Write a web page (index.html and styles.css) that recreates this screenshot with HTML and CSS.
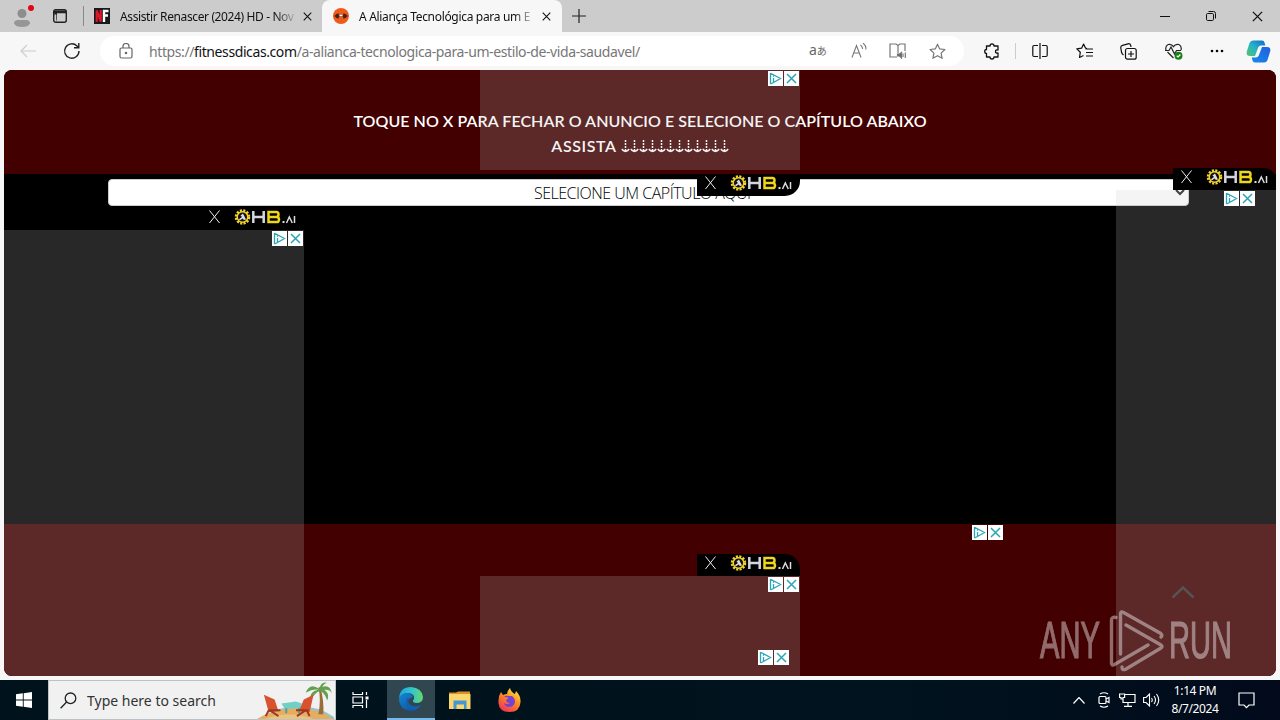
FILE: index.html
```html
<!DOCTYPE html>
<html lang="pt">
<head>
<meta charset="utf-8">
<title>A Aliança Tecnológica para um Estilo de Vida Saudável</title>
<link rel="stylesheet" href="styles.css">
</head>
<body>
<svg class="defs" aria-hidden="true">
  <symbol id="adchoice" viewBox="0 0 31 15">
    <path fill="#fff" d="M0 0h15v15H0zM16 0h15v15H16z"/>
    <path d="M2.500 2v11M2.500 2.200 12.500 7.500 5.500 11.500V7M5.500 4.600v1.200M2.500 13l3-1.500" fill="none" stroke="#2aa5b8" stroke-width="1.300"/>
    <path d="m19 3 9 9m0-9-9 9" stroke="#2aa5b8" stroke-width="1.500"/>
  </symbol>
  <symbol id="close" viewBox="0 0 10 10"><path d="m.8.8 8.400 8.400m0-8.400L.8 9.200" fill="none" stroke="currentColor" stroke-width="1.200"/></symbol>
  <symbol id="hb" viewBox="0 0 103 22">
    <path d="m8.500 2.500 10 12.500m0-12.500-10 12.500" stroke="#eee" stroke-width="1" fill="none"/>
    <circle cx="41.500" cy="9" r="6.500" fill="none" stroke="#f2d22b" stroke-width="2.500" stroke-dasharray="2.100 1.300"/>
    <circle cx="41.500" cy="9" r="5.300" fill="#111" stroke="#f2d22b" stroke-width="1.500"/>
    <path d="M37.500 11.500 41 9l-1.500-1.500L42 5.500l1.500 3 1.500 3-2 .5-1.500-1.500-2 1.500z" fill="#ddd"/>
    <path d="M52.300 3v12M62.700 3v12M52 9h11" fill="none" stroke="#d5d5e2" stroke-width="2.500"/>
    <path d="M67.500 4h8q2 0 2 2.500T75 9h-7.500 8q2.500 0 2.500 2.600T75.500 14h-8z" fill="none" stroke="#f0d51b" stroke-width="2.500"/>
    <path d="M81.500 13h2v2h-2z" fill="#ddd"/>
    <path d="m85.500 15 2.800-6 3 6M93.500 8v7" fill="none" stroke="#ddd" stroke-width="1.500"/>
  </symbol>
</svg>

<header class="tabs">
  <div class="profile">
    <svg width="20" height="20" viewBox="0 0 20 20"><circle cx="10" cy="5.500" r="4.500" fill="#8d8d8d"/><path d="M2 15.500Q2 12 6 12h8q4 0 4 3.500Q16 19 10 19t-8-3.500z" fill="#969696"/></svg>
    <i class="dot"></i>
  </div>
  <svg class="tabmenu" width="14" height="14" viewBox="0 0 14 14"><rect x=".7" y=".7" width="12.600" height="12.600" rx="2" fill="none" stroke="#222" stroke-width="1.400"/><path d="M1 1.500h12v2.800H1zM1 4h3v9" fill="#222"/><path d="M2 5.500h1.300V12H2z" fill="#ccc"/></svg>
  <i class="divider"></i>
  <div class="tab">
    <svg width="16" height="16" viewBox="0 0 16 16"><path fill="#17191b" d="M0 0h16v16H0z"/><path d="M2.700 14V2.500l4 11V2" fill="none" stroke="#dd1727" stroke-width="2.200"/><path d="M10 14V3h4.500M10 7.500h4" fill="none" stroke="#fff" stroke-width="2.400"/></svg>
    <span class="title t1">Assistir Renascer (2024) HD - Nov</span>
    <svg class="x" width="9" height="9"><use href="#close"/></svg>
  </div>
  <div class="tab active">
    <svg width="16" height="16" viewBox="0 0 16 16"><circle cx="8" cy="8" r="8" fill="#ef5b1a"/><path d="M1.500 8h13" stroke="#4a2018" stroke-width="1.500"/><path d="M3.500 6v4M5 5.500v5M11 5.500v5M12.500 6v4" stroke="#4a2018" stroke-width="1.500"/><path d="M6.500 7.600h3" stroke="#fff" stroke-width="1.500"/></svg>
    <span class="title t2">A Aliança Tecnológica para um E</span>
    <svg class="x" width="9" height="9"><use href="#close"/></svg>
  </div>
  <svg class="plus" width="14" height="14" viewBox="0 0 14 14"><path d="M7 0v14M0 7h14" stroke="#222" stroke-width="1.200"/></svg>
  <div class="winbtns">
    <svg width="10" height="10"><path d="M0 5.500h10" stroke="#111"/></svg>
    <svg width="10" height="10" viewBox="0 0 10 10" fill="none" stroke="#111"><rect x=".5" y="2.500" width="7" height="7" rx="1.200"/><path d="M2.500.5H7.500q2 0 2 2V7.500"/></svg>
    <svg width="11" height="11"><use href="#close"/></svg>
  </div>
</header>

<nav class="toolbar">
  <svg class="back" width="17" height="14" viewBox="0 0 17 14" fill="none" stroke="#ccc" stroke-width="1.100"><path d="M16 7H1m6-6L1 7l6 6"/></svg>
  <svg class="reload" width="18" height="18" viewBox="0 0 18 18" fill="none" stroke="#222" stroke-width="1.400"><path d="M16 9a7.200 7.200 0 1 1-2-5l1.500 1.500M15.800 1v4.800H11"/></svg>
  <div class="address">
    <svg width="14" height="16" viewBox="0 0 14 16" fill="none" stroke="#666" stroke-width="1.200"><rect x="1" y="5" width="12" height="10" rx="1.500"/><path d="M4 5V3.500a3 3 0 0 1 6 0V5"/><circle cx="7" cy="10" r=".7" fill="#555"/></svg>
    <span class="url">https://<b>fitnessdicas.com</b>/a-alianca-tecnologica-para-um-estilo-de-vida-saudavel/</span>
    <div class="addricons">
      <span class="lang">a<small>あ</small></span>
      <svg width="16" height="16" viewBox="0 0 16 16" fill="none" stroke="#777" stroke-width="1.100"><path d="m1 14.500 4.500-12 4.500 12M2.700 10h5.600M9.500 2q2.300 2 2 4M12 0q3.500 3 2.800 6.500"/></svg>
      <svg width="18" height="16" viewBox="0 0 18 16" fill="none" stroke="#777" stroke-width="1.200"><path d="M8 14H1V1h6l2 1.500L11 1h5v7M9 2.500V10"/><path d="M8.500 11v2h2l2 2V9.500l-2 1.500z" fill="#666"/><path d="M14 10.500v3.500M16.300 9.500V15"/></svg>
      <svg width="17" height="17" viewBox="0 0 17 17" fill="none" stroke="#777" stroke-width="1.200" stroke-linejoin="round"><path d="m8.500 1.200 2.200 4.700 5.200.6-3.800 3.600 1 5.200-4.600-2.600-4.600 2.600 1-5.200L1.100 6.500l5.200-.6z"/></svg>
    </div>
  </div>
  <svg class="puzzle" width="16" height="17" viewBox="0 0 16 17" fill="none" stroke="#111" stroke-width="1.300" stroke-linejoin="round"><path d="M2.500 3H6Q6 .8 8 .8T10 3h4v4q-2.500-.4-2.500 1.500T14 10v4h-4q0 2-2 2t-2-2H2.500v-3.500Q.7 10.500.7 8.500t1.800-2z"/></svg>
  <i class="sep"></i>
  <div class="actions">
    <svg width="16" height="16" viewBox="0 0 16 16" fill="none" stroke="#111" stroke-width="1.200"><path d="M8 0v16M6 2.500H2q-1.200 0-1.200 1.200v8.600q0 1.200 1.200 1.200h4M10 2.500h4q1.200 0 1.200 1.200v8.600q0 1.200-1.200 1.200h-4"/></svg>
    <svg width="17" height="16" viewBox="0 0 17 16" fill="none" stroke="#111" stroke-width="1.200" stroke-linejoin="round"><path d="M11 5.500 9.500 5 7.600 1 5.600 5.200.8 5.900 4.300 9.300 3.500 14.500 7.500 12.500M9.500 6H17M10 9.500h7M10 13h7"/></svg>
    <svg width="17" height="17" viewBox="0 0 17 17" fill="none" stroke="#111" stroke-width="1.200"><rect x="5.500" y="5.500" width="10.700" height="10.700" rx="2"/><path d="M11 8v6M8 11h6M3.500 12Q2 11 1.600 9.500L.8 5Q.5 3 2.500 2.400L8 .8q2-.5 2.600 1.200L11 4"/></svg>
    <svg width="18" height="17" viewBox="0 0 18 17" fill="none" stroke="#222" stroke-width="1.200"><path d="M8.500 15 2.500 9M1 7Q0 3 3.200 1.500 6.500.6 8.500 3.600 10.500.6 13.800 1.500 17 3 16 7M0 7.500h4L6 4l3.500 7L11.500 7.500H16"/><circle cx="13.500" cy="12.700" r="4" fill="#188018" stroke="none"/><path d="m11.700 12.700 1.400 1.300 2.300-2.500" stroke="#fff"/></svg>
    <svg width="14" height="4" viewBox="0 0 14 4"><circle cx="2" cy="2" r="1.300"/><circle cx="7" cy="2" r="1.300"/><circle cx="12" cy="2" r="1.300"/></svg>
  </div>
  <svg class="copilot" width="25" height="23" viewBox="0 0 25 23">
    <defs><linearGradient id="ca" x1="0" y1="1" x2="1" y2="0"><stop offset="0" stop-color="#52c46a"/><stop offset=".5" stop-color="#24b3c8"/><stop offset="1" stop-color="#1265d2"/></linearGradient><linearGradient id="cb" x1="0" y1="1" x2="1" y2="0"><stop offset="0" stop-color="#168bea"/><stop offset="1" stop-color="#225ee0"/></linearGradient></defs>
    <path d="M7 .5h9q2 0 2.500 2l.8 3H15q-2 0-2.800 2L9 16H4Q0 16 .7 12L3.500 3Q4.500.5 7 .5z" fill="url(#ca)"/><path d="M18 22.500H9q-2 0-2.500-2l-.8-3H10q2 0 2.800-2L16 7h5q4 0 3.300 4l-2.800 9q-1 2.500-3.500 2.500z" fill="url(#cb)"/>
  </svg>
</nav>

<main class="page">
  <section class="notice"><p class="l1">TOQUE NO X PARA FECHAR O ANUNCIO E SELECIONE O CAPÍTULO ABAIXO</p><p class="l2"><span>ASSISTA</span> <svg width="108" height="13" viewBox="0 0 108 13"><defs><pattern id="arrows" width="9" height="13" patternUnits="userSpaceOnUse"><path d="M4.500 0v11" stroke="#fff" stroke-width="1.500" stroke-dasharray="2 1"/><path d="m.8 9 1.500 1.500 2.200 1 2.200-1L8.200 9" fill="none" stroke="#fff" stroke-width="1.500"/></pattern></defs><path fill="url(#arrows)" d="M0 0h108v13H0z"/></svg></p></section>
  <section class="player">
    <div class="select"><span>SELECIONE UM CAPÍTULO AQUI</span><svg width="10" height="7" viewBox="0 0 10 7"><path d="m1 1 4 4 4-4" fill="none" stroke="#222" stroke-width="2"/></svg></div>
  </section>
  <section class="foot"></section>

  <div class="ad ad-top"><svg width="31" height="15"><use href="#adchoice"/></svg></div>
  <div class="ad ad-left"><svg width="31" height="15"><use href="#adchoice"/></svg></div>
  <div class="ad ad-right"></div>
  <div class="ad ad-bottom"><svg width="31" height="15"><use href="#adchoice"/></svg></div>
  <svg class="mark m-right" width="31" height="15"><use href="#adchoice"/></svg>
  <svg class="mark m-mid" width="31" height="15"><use href="#adchoice"/></svg>
  <svg class="mark m-low" width="31" height="15"><use href="#adchoice"/></svg>
  <svg class="hb hb-top" width="103" height="22"><use href="#hb"/></svg>
  <svg class="hb hb-left" width="103" height="22"><use href="#hb"/></svg>
  <svg class="hb hb-right" width="103" height="22"><use href="#hb"/></svg>
  <svg class="hb hb-bottom" width="103" height="22"><use href="#hb"/></svg>
  <svg class="totop" width="24" height="14" viewBox="0 0 24 14"><path d="M1.500 12.500 12 2.500l10.500 10" fill="none" stroke="#565353" stroke-width="2.500"/></svg>
  <div class="watermark">
    <span>ANY</span>
    <svg width="56" height="62" viewBox="0 0 56 62" fill="none" stroke="#fff" stroke-width="3.400" stroke-linejoin="round" stroke-linecap="round"><path d="M7 7.500Q2.500 6.500 2.500 10v43q0 3 3 1.500L39 35M11.500 44V4q0-3 3-1.500L51 23q3 2 1 4M17 15l35 20q2 1.500 0 3L17 59q-4 2-4-2"/></svg>
    <span>RUN</span>
  </div>
</main>

<footer class="taskbar">
  <div class="start"><svg width="16" height="16" viewBox="0 0 16 16" fill="#fff"><path d="M0 2.300 6.800 1.300v6.200H0zM7.700 1.200 16 0v7.500H7.700zM0 8.400h6.800v6.300L0 13.700zM7.700 8.400H16V16l-8.300-1.200z"/></svg></div>
  <div class="search">
    <svg width="17" height="17" viewBox="0 0 17 17" fill="none" stroke="#222" stroke-width="1.300"><circle cx="10.500" cy="6.300" r="5.300"/><path d="m6.600 10-6 6.300"/></svg>
    <span>Type here to search</span>
    <svg class="beach" width="78" height="37" viewBox="0 0 80 38">
      <path d="M6 36Q22 25 43 25t36 11v2H4z" fill="#8dc7d8"/><path d="M0 38Q16 28 39 27t40 11z" fill="#e6ad61"/><path d="M8 38q24-9 50 0z" fill="#edc27d"/>
      <path d="M63 33q3-15 0-27l2-1q4 15 3 28z" fill="#9b6d36"/>
      <path d="M64 7Q54 0 50 11q7-4 13-3-10 2-8 11 4-8 10-10 5 3 7 10 3-7-3-11 6-1 8 4Q75 2 67 5q2-4 5-4-6-2-8 6z" fill="#63a04f"/>
      <path d="m25 22 15-2 6 2-1 5H28z" fill="#72cfc5"/><path d="M30 27v5m13-5v5" stroke="#4d9f9c" stroke-width="2"/>
      <path d="m7 13 11 5 4 12-10 1zM58 13l-10 5-5 12 11 1z" fill="#d9522f"/><path d="m12 29-3 6m4-6 9 6m28-6-9 6m10-6 3 6M12 29h12m16 0h13" stroke="#9d3826" stroke-width="2"/>
    </svg>
  </div>
  <div class="task"><svg width="17" height="16" viewBox="0 0 17 16" fill="none" stroke="#fff" stroke-width="1.200"><path d="M1 0v2.500h9.500V0M1 16v-2.500h9.500V16M1 5h9.500v6H1zM14.500 0v3M14.500 8v8"/><path d="M13.500 4.500h3v3h-3z" fill="#fff" stroke="none"/></svg></div>
  <div class="task current">
    <svg width="24" height="24" viewBox="0 0 24 24"><defs><linearGradient id="ea" x1="0" x2="1"><stop offset="0" stop-color="#1aa7e0"/><stop offset=".55" stop-color="#35c5cd"/><stop offset="1" stop-color="#66d868"/></linearGradient><linearGradient id="eb" x1="0" y1="0" x2="1" y2="1"><stop offset="0" stop-color="#1787d6"/><stop offset="1" stop-color="#0a4996"/></linearGradient></defs><path d="M0 11Q1 0 12 0q11 1 12 10 0 6-7 6-5-1-2-4 1-5-5-6-7 0-10 5z" fill="url(#ea)"/><path d="M0 11Q3 6 8 6q5 0 6 4-7 2-4 7 4 5 12 1-4 6-10 6Q0 23 0 11z" fill="url(#eb)"/><path d="M8 11q-3 10 7 12 5-1 7-5-8 3-12-1-2-3 0-6z" fill="#155fae"/></svg>
  </div>
  <div class="task"><svg width="22" height="18" viewBox="0 0 22 18"><path d="M0 1.500h7l2-1h12v3H0z" fill="#dc9127"/><path d="M0 3h21.500v15H0z" fill="#fad66e"/><path d="M4.500 9.500h13V18H15v-4.500H7.500V18h-3z" fill="#4497d4"/></svg></div>
  <div class="task"><svg width="23" height="24" viewBox="0 0 23 24"><defs><linearGradient id="ff" x1=".8" y1="0" x2=".2" y2="1"><stop offset="0" stop-color="#ffe73c"/><stop offset=".45" stop-color="#ff8b22"/><stop offset="1" stop-color="#ef2d5a"/></linearGradient></defs><path d="M3 4 5 7q2-1 4-1 0-3 3-6 1 4 5 6l1-3q5 5 4.500 11-.5 10-11 10T.5 15Q0 8 3 4z" fill="url(#ff)"/><path d="M6 9q2-2 5-1h3q3 2 3 6-1 5-6 5-4 0-5-4 3 2 6 0-3 0-4-2 0-2 3-3Q8 9 6 9z" fill="#7543cf"/></svg></div>
  <div class="tray">
    <svg width="12" height="7" viewBox="0 0 12 7" fill="none" stroke="#fff" stroke-width="1.200"><path d="m.5 6.500 5.500-6 5.500 6"/></svg>
    <svg class="meet" width="12" height="16" viewBox="0 0 12 16" fill="none" stroke="#fff" stroke-width="1.200"><rect x="1" y="4.500" width="7" height="7" rx="1"/><path d="m8 7 3-1.500v5L8 9M2 2q4-2.500 8 0M2 14q4 2.500 8 0"/></svg>
    <svg class="net" width="17" height="14" viewBox="0 0 17 14" fill="none" stroke="#fff" stroke-width="1.200"><path d="M6 1.500h10v8H4V6M9 10v3M5 13.300h8M.6 1h5v3.500H4V6H2V4.500H.6z"/></svg>
    <svg class="vol" width="17" height="14" viewBox="0 0 17 14" fill="none" stroke="#fff" stroke-width="1.100"><path d="M.6 4.500h2.500L6.500 1v12L3.100 9.500H.6zM8.500 5q1.500 2 0 4M11 3q3 4 0 8M13.500 1q4.500 6 0 12"/></svg>
    <div class="clock"><span>1:14 PM</span><span>8/7/2024</span></div>
    <svg class="note" width="17" height="17" viewBox="0 0 17 17" fill="none" stroke="#fff" stroke-width="1.200"><path d="M1 1h15v12h-5l-2.500 2.700L6 13H1z"/></svg>
  </div>
</footer>
</body>
</html>
```
FILE: styles.css
```css
* { box-sizing: border-box; }
body {
  margin: 0; width: 1280px; height: 720px; overflow: hidden;
  display: flex; flex-direction: column;
  background: #f7f7f7; color: #111;
  font-family: "Noto Sans", "Open Sans", sans-serif;
}
svg { flex: none; display: block; }
i { flex: none; }
.defs { position: absolute; width: 0; height: 0; }

.tabs { height: 32px; flex: none; display: flex; align-items: center; background: #ccc; }
.profile { position: relative; margin-left: 12px; padding-top: 3px; }
.dot { position: absolute; left: 16px; top: 0; width: 6px; height: 6px; border-radius: 50%; background: #e30613; }
.tabmenu { margin-left: 21px; }
.divider { width: 1px; height: 20px; margin-left: 16px; background: #888; }
.tab { display: flex; align-items: center; height: 32px; width: 238px; padding-left: 10px; font-size: 12px; }
.tab.active { width: 240px; background: #f7f7f7; border-radius: 8px 8px 0 0; padding-left: 11px; }
.title { white-space: nowrap; width: 175px; margin-left: 10px; -webkit-mask-image: linear-gradient(90deg, #000 155px, transparent 178px); }
.t1 { letter-spacing: -.38px; }
.t2 { letter-spacing: -.32px; }
.x { margin-left: 8px; }
.plus { margin-left: 10px; }
.winbtns { margin-left: auto; display: flex; align-items: center; gap: 36px; padding-right: 17px; }

.toolbar { height: 38px; flex: none; display: flex; align-items: center; }
.back { margin-left: 20px; }
.reload { margin-left: 26px; }
.address { width: 864px; height: 30px; margin-left: 19px; border-radius: 15px; background: #fff; display: flex; align-items: center; padding: 0 18px 0 19px; }
.url { margin-left: 16px; font-size: 14px; color: #777; white-space: nowrap; letter-spacing: -.4px; }
.url b { font-weight: 400; color: #111; }
.addricons { margin-left: auto; display: flex; align-items: center; gap: 22px; }
.lang { font: 14px/16px "Noto Sans", "Noto Sans CJK JP", sans-serif; color: #666; width: 20px; white-space: nowrap; padding-bottom: 2px; }
.lang small { font-size: 10px; }
.puzzle { margin-left: 20px; }
.sep { width: 1px; height: 16px; background: #ccc; margin-left: 15px; }
.actions { display: flex; align-items: center; gap: 27.500px; margin-left: 16px; }
.copilot { margin-left: 22px; }

.page { position: relative; height: 606px; flex: none; margin: 0 4px; border-radius: 8px; overflow: hidden; background: #000; display: flex; flex-direction: column; }
.notice { height: 104px; background: #420000; color: #fff; display: flex; flex-direction: column; align-items: center; padding-top: 38px; font: 600 16px/25px Lato, "Open Sans", sans-serif; }
.notice p { margin: 0; white-space: nowrap; }
.l1 { letter-spacing: .05px; }
.l2 { display: flex; align-items: center; gap: 4px; letter-spacing: .6px; }
.l2 svg { margin-top: 2px; }
.player { height: 350px; padding: 5px 0 0 104px; }
.select { width: 1081px; height: 27px; border-radius: 4px; background: #fff; border: 1px solid #ccc; display: flex; align-items: center; padding: 0 3px 0 425px; justify-content: space-between; font: 300 16px "Open Sans", sans-serif; letter-spacing: -.5px; color: #000; }
.select span { white-space: nowrap; }
.foot { flex: 1; background: #420000; }

.ad { position: absolute; background: rgba(198, 198, 198, .2); display: flex; justify-content: flex-end; padding: 1px 1px 0 0; }
.ad-top { left: 476px; top: 0; width: 320px; height: 100px; }
.ad-left { left: 0; top: 160px; width: 300px; height: 446px; }
.ad-right { left: 1112px; top: 120px; width: 160px; height: 486px; }
.ad-bottom { left: 476px; top: 506px; width: 320px; height: 100px; }
.mark { position: absolute; }
.m-right { left: 1220px; top: 121px; }
.m-mid { left: 968px; top: 455px; }
.m-low { left: 754px; top: 580px; }
.hb { position: absolute; background: #000; }
.hb-top { left: 693px; top: 104px; border-radius: 0 0 15px 0; }
.hb-left { left: 197px; top: 138px; }
.hb-right { left: 1169px; top: 98px; border-radius: 0 12px 0 0; }
.hb-bottom { left: 693px; top: 484px; border-radius: 0 15px 0 0; }
.totop { position: absolute; left: 1167px; top: 515px; }
.watermark { position: absolute; left: 1036px; top: 540px; display: flex; align-items: center; opacity: .42; color: #fff; }
.watermark span { font: 51px/62px "Liberation Sans", sans-serif; -webkit-text-stroke: 1.200px #fff; transform: scaleX(.57); transform-origin: 0 50%; white-space: nowrap; width: 62px; }
.watermark svg { margin: 0 4px 0 7px; }

.taskbar { height: 40px; flex: none; margin-top: 4px; display: flex; background: linear-gradient(90deg, #00131c, #00131e 70%, #020a1b); }
.start { width: 48px; display: flex; align-items: center; justify-content: center; }
.search { width: 288px; background: #f1f1f1; border: 1px solid #bbc3c6; display: flex; align-items: center; padding-left: 11px; font-size: 14px; color: #333; }
.search span { margin-left: 10px; white-space: nowrap; }
.beach { margin-left: auto; }
.task { width: 48px; display: flex; align-items: center; justify-content: center; }
.task + .task { margin-left: 1px; }
.task + .task.current { background: #304650; border-bottom: 2px solid #76b9ed; margin-left: 3px; }
.tray { margin-left: auto; display: flex; align-items: center; padding-right: 25px; color: #fff; font-size: 12px; }
.meet { margin-left: 13px; }
.net { margin-left: 9px; }
.vol { margin-left: 7px; }
.clock { display: flex; flex-direction: column; align-items: center; width: 56px; margin-left: 7px; line-height: 18px; letter-spacing: -.4px; white-space: nowrap; }
.note { margin-left: 15px; }
```
